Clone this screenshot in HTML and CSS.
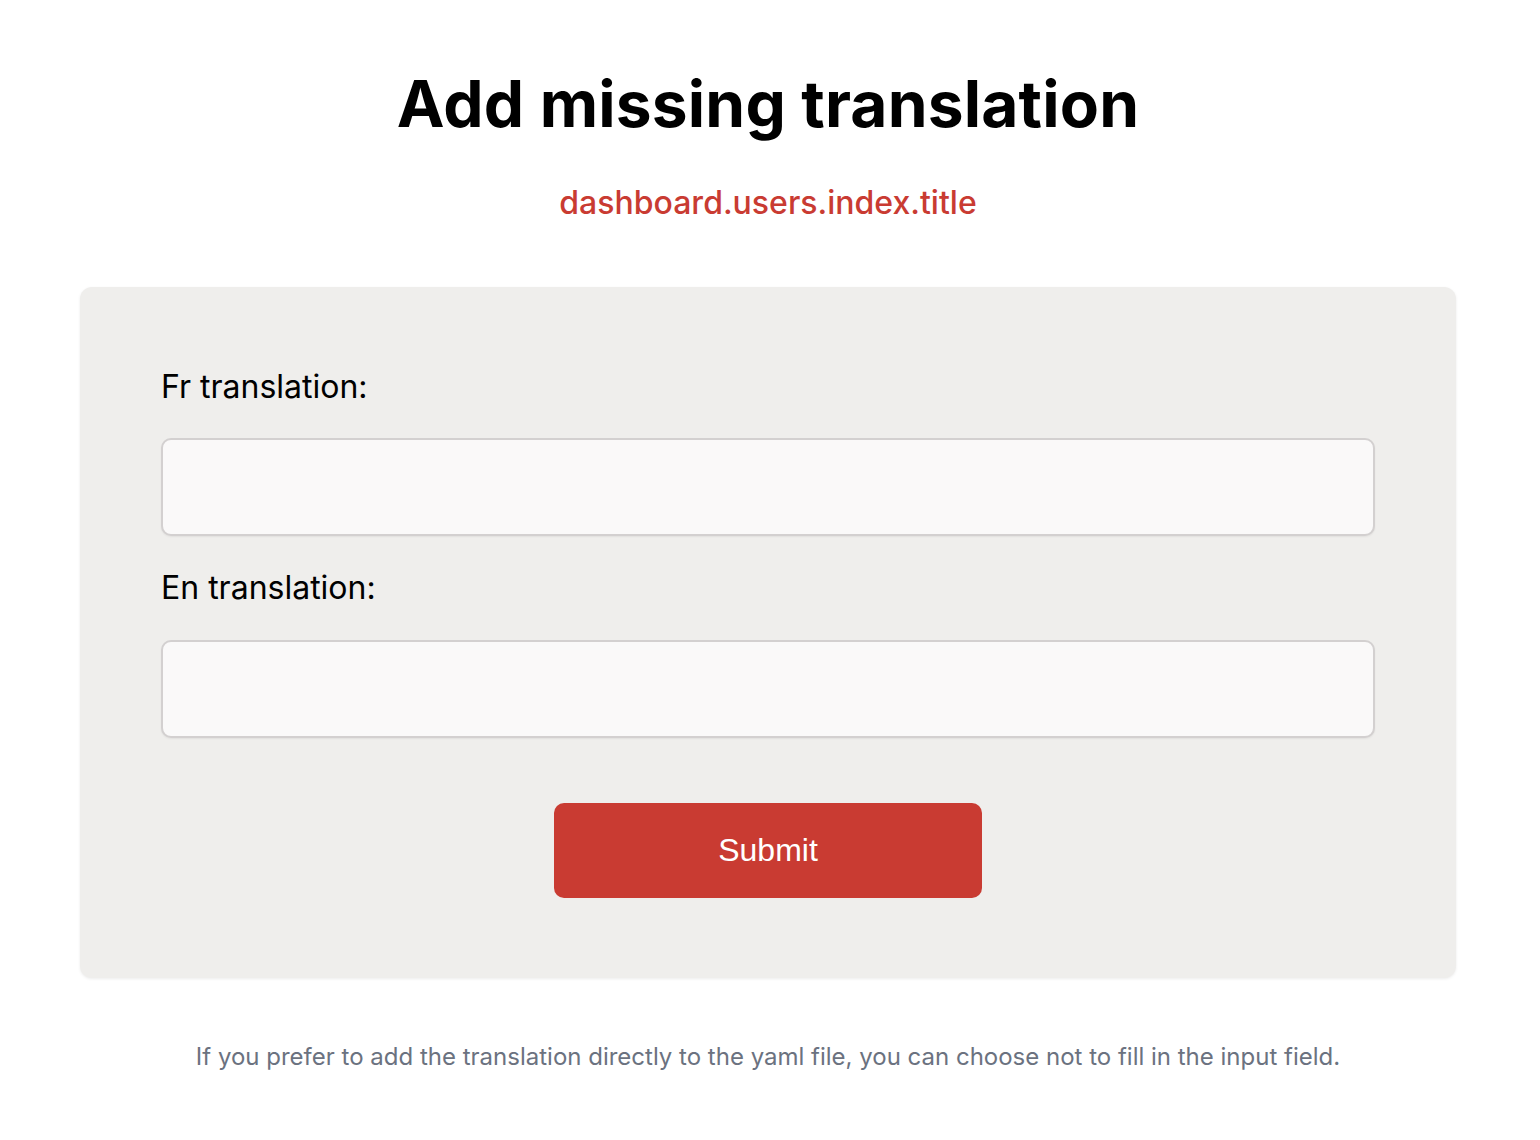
FILE: index.html
```html
<!DOCTYPE html>
<html lang="en">
<head>
<meta charset="utf-8">
<title>Add missing translation</title>
<link rel="stylesheet" href="styles.css">
</head>
<body>
<main class="page">
  <h1 class="title">Add missing translation</h1>
  <p class="key">dashboard.users.index.title</p>
  <form class="card">
    <label class="label" for="fr">Fr translation:</label>
    <input class="field" id="fr" type="text">
    <label class="label label-second" for="en">En translation:</label>
    <input class="field" id="en" type="text">
    <div class="actions">
      <button class="submit" type="button">Submit</button>
    </div>
  </form>
  <p class="note">If you prefer to add the translation directly to the yaml file, you can choose not to fill in the input field.</p>
</main>
</body>
</html>
```

FILE: styles.css
```css
* { box-sizing: border-box; }
html, body { margin: 0; padding: 0; background: #ffffff; }
body { font-family: Inter, "Liberation Sans", sans-serif; color: #000; }

.page {
  display: flex;
  flex-direction: column;
  align-items: center;
  padding: 64px 84px 0 80px;
}

.title {
  margin: 0;
  font-size: 64px;
  line-height: 80px;
  font-weight: 700;
  letter-spacing: 0.18px;
}

.key {
  margin: 39px 0 0;
  font-size: 32px;
  line-height: 40px;
  font-weight: 500;
  color: #c93b32;
}

.card {
  align-self: stretch;
  margin-top: 64px;
  background: #efeeec;
  border-radius: 12px;
  box-shadow: 0 1px 3px rgba(0,0,0,0.08);
  padding: 80px 81px 80px;
  display: flex;
  flex-direction: column;
}

.label {
  font-size: 32px;
  line-height: 40px;
  font-weight: 400;
  color: #000;
}
.label-second { margin-top: 32px; }

.field {
  margin-top: 31px;
  height: 98px;
  background: #faf9f9;
  border: 2px solid #d3d0d0;
  border-radius: 10px;
  box-shadow: 0 1px 2px rgba(0,0,0,0.06);
  font: inherit;
  font-size: 30px;
  padding: 0 20px;
  outline: none;
}
.label-second + .field { margin-top: 32px; }

.actions {
  display: flex;
  justify-content: center;
  margin-top: 65px;
}

.submit {
  width: 428px;
  height: 95px;
  border: none;
  border-radius: 10px;
  background: #c93b32;
  color: #ffffff;
  font-family: "Liberation Sans", Arial, sans-serif;
  font-size: 32px;
  cursor: pointer;
}

.note {
  margin: 63px 0 0;
  font-size: 24px;
  line-height: 32px;
  color: #6b7280;
}
```
